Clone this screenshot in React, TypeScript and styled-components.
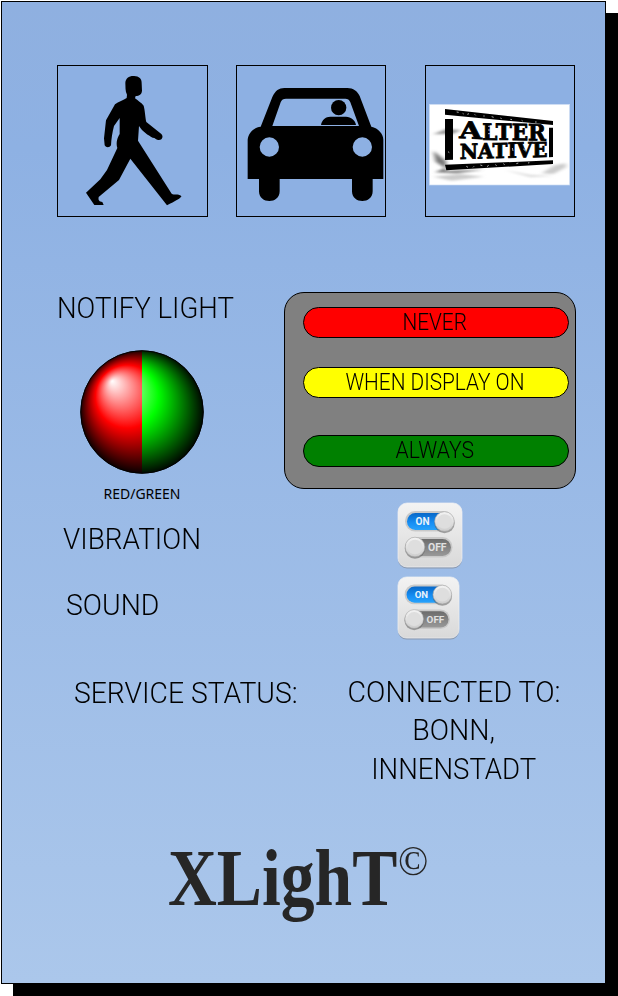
import React from "react";
import styled, { createGlobalStyle } from "styled-components";

const GlobalStyle = createGlobalStyle`
  * { box-sizing: border-box; }
  html, body { margin: 0; background: #fff; overflow: hidden; }
`;

const Page = styled.div`
  width: 618px;
  height: 996px;
  padding: 1px;
  overflow: hidden;
`;

const Screen = styled.main`
  width: 605px;
  height: 983px;
  border: 1px solid #000;
  background: linear-gradient(#8fb0e0 0%, #8eb1e3 15%, #abc7eb 100%);
  box-shadow: 12px 12px 0 #000;
  display: flex;
  flex-direction: column;
  color: #000;
  font-family: Roboto, "Liberation Sans", sans-serif;
  font-weight: 300;
`;

const Modes = styled.nav`
  display: grid;
  grid-template-columns: 151px 150px 150px;
  column-gap: 28px;
  margin: 63px 0 0 55px;
  & > :last-child { margin-left: 11px; }
`;

const ModeTile = styled.button`
  width: 100%;
  min-width: 150px;
  height: 152px;
  padding: 0;
  border: 1px solid #000;
  background: #8db0e3;
  display: block;
  svg { display: block; }
`;

const Notify = styled.section`
  display: grid;
  grid-template-columns: 227px 292px;
  margin: 75px 0 0 55px;
  height: 207px;
`;

const LightColumn = styled.div`
  display: flex;
  flex-direction: column;
  align-items: flex-start;
`;

const Label = styled.div<{ $squeeze?: number; $size?: number; $line?: number }>`
  font-size: ${(p) => p.$size ?? 30}px;
  line-height: ${(p) => p.$line ?? 38}px;
  white-space: nowrap;
  transform: scaleX(${(p) => p.$squeeze ?? 0.92});
  transform-origin: left center;
`;

const CenterLabel = styled(Label)`
  transform-origin: center;
`;

const NotifyLabel = styled(Label)`
  margin-top: -3px;
`;

const Lamp = styled.svg`
  display: block;
  width: 126px;
  height: 126px;
  margin: 22px 0 0 22px;
`;

const Caption = styled.div`
  width: 126px;
  margin: 9px 0 0 22px;
  text-align: center;
  font: 400 14px/20px "Noto Sans", sans-serif;
`;

const Options = styled.div`
  width: 292px;
  height: 197px;
  border: 1px solid #000;
  border-radius: 20px;
  background: #808080;
  padding: 14px 6px 0 18px;
  display: grid;
  grid-template-rows: 31px 31px 32px;
  row-gap: 29px;
  & > :last-child { margin-top: 8px; height: 32px; }
`;

const Option = styled.button<{ $color: string }>`
  width: 266px;
  height: 31px;
  padding: 0 2px 0 0;
  border: 1px solid #000;
  border-radius: 16px;
  background: ${(p) => p.$color};
  color: #000;
  font: inherit;
  display: flex;
  align-items: center;
  justify-content: center;
`;

const Setting = styled.section<{ $indent: number; $inset: number; $height: number }>`
  height: ${(p) => p.$height}px;
  display: flex;
  justify-content: space-between;
  align-items: center;
  padding: 0 ${(p) => p.$inset}px 0 ${(p) => p.$indent}px;
`;

const VibrationLabel = styled(Label)`
  padding-top: 6px;
`;

const SoundLabel = styled(Label)`
  padding-bottom: 6px;
`;

const Status = styled.section`
  display: grid;
  grid-template-columns: 274px 212px;
  margin: 30px 0 0 72px;
  height: 120px;
`;

const ServiceLabel = styled(Label)`
  padding-top: 1px;
`;

const StatusValue = styled.div`
  display: flex;
  flex-direction: column;
  align-items: center;
`;

const Brand = styled.footer`
  display: flex;
  align-items: flex-start;
  margin: 37px 0 0 166px;
  color: #262626;
  font-family: "Liberation Serif", serif;
`;

const Wordmark = styled.div`
  width: 230px;
  font-size: 81px;
  line-height: 97px;
  font-weight: 700;
  white-space: nowrap;
  transform: scaleX(0.835);
  transform-origin: left center;
`;

const Copyright = styled.div`
  margin-top: 7px;
  font-size: 42px;
  line-height: 48px;
  font-weight: 400;
  transform: scaleX(0.95);
  transform-origin: left center;
`;

const Pedestrian = () => (
  <svg width="149" height="150" viewBox="24 18 447 450">
    <path d="M250 48C266 47 276 56 275 70L276 92C275 103 268 108 257 108L255 115C262 121 275 129 281 137C285 151 286 174 289 186L334 222C341 229 337 240 327 240C320 241 316 233 308 233C294 225 278 216 267 198L264 242L365 401C374 407 383 400 394 408C396 413 374 424 351 436L241 296L207 360L146 411C144 421 148 425 157 426L161 435H133L108 398L151 358L171 330L202 264C197 247 203 231 209 222V174L192 198C187 216 184 238 183 256C179 264 168 264 164 256L162 235L168 181L195 133C205 125 221 121 230 114L231 104C225 92 227 81 226 69C227 55 236 48 250 48Z" />
  </svg>
);

const Car = () => (
  <svg width="148" height="150" viewBox="21 18 444 450">
    <path fillRule="evenodd" d="M92 200L127 111C136 92 147 84 163 84H352C370 84 382 93 389 108L424 200C445 204 460 222 460 239V357H428V394C428 433 366 433 366 394V357H149V394C149 433 87 433 87 394V357H53V239C55 219 72 202 92 200ZM127 198H387L361 127C358 119 353 116 346 116H168C160 116 155 119 152 127ZM118 232A29 29 0 1 0 118 290A29 29 0 1 0 118 232ZM397 232A29 29 0 1 0 397 290A29 29 0 1 0 397 232Z" />
    <circle cx="326" cy="143" r="23" />
    <path d="M273 195C275 180 287 170 301 170H348C363 170 376 181 378 195Z" />
  </svg>
);

const Alternative = () => (
  <svg width="148" height="150" viewBox="18 18 444 450">
    <defs>
      <filter id="smoke" x="-30%" y="-60%" width="160%" height="220%">
        <feGaussianBlur stdDeviation="6 3" />
      </filter>
      <clipPath id="card"><rect x="28" y="133" width="421" height="242" /></clipPath>
    </defs>
    <rect x="28" y="133" width="421" height="242" fill="#fff" stroke="#c9daf2" strokeWidth="2" />
    <g clipPath="url(#card)">
      <g filter="url(#smoke)">
        <path d="M40 223L78 207L122 210L98 222Z" fill="#999" />
        <path d="M40 272L78 303L79 333L190 329L110 340L45 337L75 324L47 305Z" fill="#777" />
        <path d="M40 350L120 342L190 350L95 362Z" fill="#ccc" />
        <path d="M365 340L405 315L437 310L438 322L400 342Z" fill="#ccc" />
        <path d="M255 330L330 344L405 348L330 352Z" fill="#ddd" />
      </g>
      <path d="M75 147L399 183V195L75 164ZM75 177H99V299L75 300ZM387 203H399V291L387 292ZM75 314L399 301V312L79 331Z" />
      <g fill="#000" fontFamily="DejaVu Serif" fontWeight="700" stroke="#000" strokeWidth="2.500">
        <text transform="matrix(1 .05 0 1 118 234)" fontSize="70" textLength="68" lengthAdjust="spacingAndGlyphs">A</text>
        <text transform="matrix(1 .015 0 1 187 239)" fontSize="67" textLength="191" lengthAdjust="spacingAndGlyphs">LTER</text>
        <text transform="matrix(1 -.025 0 1 119 297)" fontSize="62" textLength="264" lengthAdjust="spacingAndGlyphs">NATIVE</text>
      </g>
      <path d="M110 156l6 1M128 160l3 2M142 163l5-2M164 163l3 3M190 168l4 0M215 170l6 2M241 174l4 2M271 178l5 1M305 181l3 2M345 186l5 0M84 275l4 3M139 319l5 3M159 322l3-3M181 315l6 2M201 320l5-4M226 314l4 3M250 311l4 3M289 311l6-2M324 309l4-1M204 199l9 0M204 210l8 0M204 221l7 0M226 273l3 7M277 264l2 9M310 267l5 4" stroke="#fff" strokeWidth="2" fill="none" />
    </g>
  </svg>
);

const BicolorLamp = () => (
  <Lamp viewBox="0 0 126 126">
    <defs>
      <radialGradient id="red" gradientUnits="userSpaceOnUse" cx="63" cy="63" r="63" fx="33" fy="32">
        <stop offset="0" stopColor="#fff" />
        <stop offset=".5" stopColor="#f00" />
        <stop offset="1" stopColor="#000" />
      </radialGradient>
      <radialGradient id="green" gradientUnits="userSpaceOnUse" cx="63" cy="63" r="63" fx="33" fy="32">
        <stop offset="0" stopColor="#fff" />
        <stop offset=".5" stopColor="#0f0" />
        <stop offset="1" stopColor="#000" />
      </radialGradient>
    </defs>
    <path d="M63 1.500A61.500 61.500 0 0 0 63 124.500Z" fill="url(#red)" />
    <path d="M63 1.500A61.500 61.500 0 0 1 63 124.500Z" fill="url(#green)" />
    <circle cx="63" cy="63" r="61.300" fill="none" stroke="#000" />
  </Lamp>
);

const Switches = ({ width, height }: { width: number; height: number }) => (
  <svg width={width} height={height} viewBox="0 0 66 67" preserveAspectRatio="none">
    <defs>
      <linearGradient id="plate" x2="0" y2="1"><stop stopColor="#f3f3f3" /><stop offset="1" stopColor="#d9d9d9" /></linearGradient>
      <linearGradient id="on" x2="0" y2="1"><stop stopColor="#0868c8" /><stop offset=".6" stopColor="#168ff5" /><stop offset="1" stopColor="#27a2fb" /></linearGradient>
      <linearGradient id="off" x2="0" y2="1"><stop stopColor="#6c6c6c" /><stop offset="1" stopColor="#999" /></linearGradient>
      <linearGradient id="knob" x2="0" y2="1"><stop stopColor="#f4f4f4" /><stop offset="1" stopColor="#cdcdcd" /></linearGradient>
    </defs>
    <rect x="1" y="2" width="64" height="64.500" rx="9" fill="#8998ae" />
    <rect x="1" y="1" width="64" height="64" rx="9" fill="url(#plate)" stroke="#f0f1f3" strokeWidth=".7" />
    <rect x="8" y="9" width="49" height="20.500" rx="10" fill="#c9c9c9" />
    <rect x="10" y="11" width="45" height="17" rx="8.500" fill="url(#on)" />
    <rect x="8" y="35" width="47.500" height="20.500" rx="10" fill="#c9c9c9" />
    <rect x="10" y="37" width="44" height="17" rx="8.500" fill="url(#off)" />
    <circle cx="47.500" cy="21" r="10.200" fill="#555" opacity=".5" />
    <circle cx="47.500" cy="19.500" r="9.800" fill="url(#knob)" stroke="#aaa" strokeWidth=".6" />
    <circle cx="47.500" cy="19.500" r="7.300" fill="#dedede" />
    <circle cx="18" cy="46.500" r="10.200" fill="#555" opacity=".5" />
    <circle cx="18" cy="45" r="9.800" fill="url(#knob)" stroke="#aaa" strokeWidth=".6" />
    <circle cx="18" cy="45" r="7.300" fill="#dedede" />
    <g fontFamily="Roboto" fontWeight="700" fontSize="10" fill="#e9f2fa">
      <text x="18.500" y="23.400" textLength="14" lengthAdjust="spacingAndGlyphs">ON</text>
      <text x="31" y="49.200" textLength="18.500" lengthAdjust="spacingAndGlyphs" fill="#e1e1e1">OFF</text>
    </g>
  </svg>
);

export default function App() {
  return (
    <Page>
      <GlobalStyle />
      <Screen>
        <Modes>
          <ModeTile><Pedestrian /></ModeTile>
          <ModeTile><Car /></ModeTile>
          <ModeTile><Alternative /></ModeTile>
        </Modes>
        <Notify>
          <LightColumn>
            <NotifyLabel>NOTIFY LIGHT</NotifyLabel>
            <BicolorLamp />
            <Caption>RED/GREEN</Caption>
          </LightColumn>
          <Options>
            <Option $color="#ff0000"><CenterLabel $size={23} $line={30} $squeeze={0.905}>NEVER</CenterLabel></Option>
            <Option $color="#ffff00"><CenterLabel $size={23} $line={30} $squeeze={0.905}>WHEN DISPLAY ON</CenterLabel></Option>
            <Option $color="#008000"><CenterLabel $size={23} $line={30}>ALWAYS</CenterLabel></Option>
          </Options>
        </Notify>
        <Setting $indent={61} $inset={142} $height={73}>
          <VibrationLabel $squeeze={0.93}>VIBRATION</VibrationLabel>
          <Switches width={66} height={67} />
        </Setting>
        <Setting $indent={64} $inset={145} $height={71}>
          <SoundLabel $squeeze={0.945}>SOUND</SoundLabel>
          <Switches width={63} height={64} />
        </Setting>
        <Status>
          <ServiceLabel $squeeze={0.943}>SERVICE STATUS:</ServiceLabel>
          <StatusValue>
            <CenterLabel $squeeze={0.95}>CONNECTED TO:</CenterLabel>
            <CenterLabel $squeeze={0.95}>BONN,</CenterLabel>
            <CenterLabel $line={40}>INNENSTADT</CenterLabel>
          </StatusValue>
        </Status>
        <Brand>
          <Wordmark>XLighT</Wordmark>
          <Copyright>©</Copyright>
        </Brand>
      </Screen>
    </Page>
  );
}
